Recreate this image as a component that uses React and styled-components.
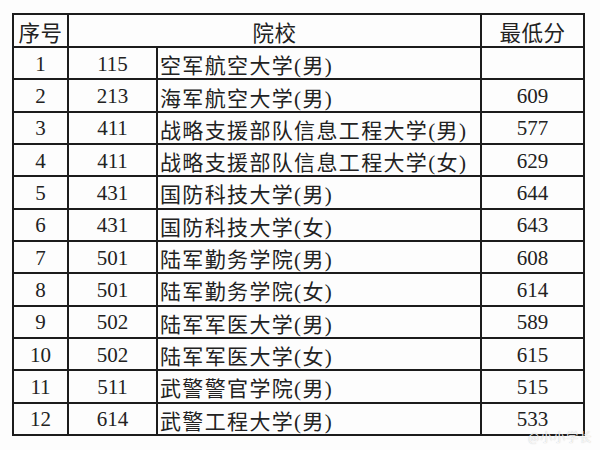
import React from "react";
import styled, { createGlobalStyle } from "styled-components";

const Global = createGlobalStyle`
  html, body { margin: 0; padding: 0; background: #fff; }
  body { width: 600px; height: 450px; overflow: hidden; }
`;

const Page = styled.div`
  position: relative;
  width: 600px;
  height: 450px;
  padding: 13px 0 0 12px;
  box-sizing: border-box;
  background: #fdfdfd;
`;

const Grid = styled.div`
  display: grid;
  width: 573px;
  box-sizing: border-box;
  grid-template-columns: 53px 87px 322px 101px;
  grid-template-rows: 31px repeat(12, 30.33px);
  gap: 2px;
  padding: 2px;
  background: #1c1c1c;
`;

const Cell = styled.div`
  background: #fdfdfd;
  display: flex;
  align-items: center;
  justify-content: ${(p) => (p.$left ? "flex-start" : "center")};
  padding: 2px 0 0 ${(p) => (p.$left ? "2px" : "0")};
  box-sizing: border-box;
  grid-column: ${(p) => p.$span || "auto"};
  font-family: "Liberation Serif", "Noto Sans CJK SC", serif;
  font-size: 21px;
  color: #222;
  white-space: nowrap;
  letter-spacing: ${(p) => (p.$cjk ? "1.35px" : "0")};
`;

const HeadCell = styled(Cell)`
  font-family: "Noto Sans CJK SC", sans-serif;
  font-size: 21.5px;
  letter-spacing: 0.5px;
  padding-top: 1px;
`;

const Watermark = styled.span`
  position: absolute;
  left: 528px;
  top: 430px;
  font-family: "Noto Sans CJK SC", sans-serif;
  font-size: 12px;
  line-height: 14px;
  color: rgba(255, 255, 255, 0.9);
  text-shadow: 0 0 1px rgba(120, 120, 120, 0.5);
  letter-spacing: 1px;
`;

const rows = [
  ["1", "115", "空军航空大学(男)", ""],
  ["2", "213", "海军航空大学(男)", "609"],
  ["3", "411", "战略支援部队信息工程大学(男)", "577"],
  ["4", "411", "战略支援部队信息工程大学(女)", "629"],
  ["5", "431", "国防科技大学(男)", "644"],
  ["6", "431", "国防科技大学(女)", "643"],
  ["7", "501", "陆军勤务学院(男)", "608"],
  ["8", "501", "陆军勤务学院(女)", "614"],
  ["9", "502", "陆军军医大学(男)", "589"],
  ["10", "502", "陆军军医大学(女)", "615"],
  ["11", "511", "武警警官学院(男)", "515"],
  ["12", "614", "武警工程大学(男)", "533"],
];

export default function App() {
  return (
    <Page>
      <Global />
      <Grid>
        <HeadCell>序号</HeadCell>
        <HeadCell $span="2 / 4">院校</HeadCell>
        <HeadCell>最低分</HeadCell>
        {rows.map((r) => (
          <React.Fragment key={r[0]}>
            <Cell>{r[0]}</Cell>
            <Cell>{r[1]}</Cell>
            <Cell $left $cjk>{r[2]}</Cell>
            <Cell>{r[3]}</Cell>
          </React.Fragment>
        ))}
      </Grid>
      <Watermark>@小小学长</Watermark>
    </Page>
  );
}
